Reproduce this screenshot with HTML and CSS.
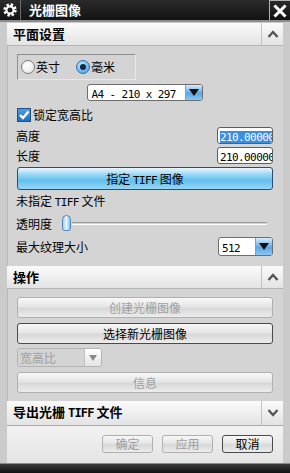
FILE: index.html
```html
<!DOCTYPE html>
<html lang="zh">
<head>
<meta charset="utf-8">
<title>光栅图像</title>
<link rel="stylesheet" href="styles.css">
</head>
<body>
<div class="titlebar">
  <div class="tb-icon">
    <svg width="14" height="14" viewBox="0 0 14 14"><circle cx="7" cy="7" r="5.4" fill="none" stroke="#fff" stroke-width="2.6" stroke-dasharray="2.4 1.84"/><circle cx="7" cy="7" r="3.6" fill="none" stroke="#fff" stroke-width="2.2"/></svg>
  </div>
  <div class="tb-title">光栅图像</div>
  <div class="tb-close">
    <svg width="14" height="14" viewBox="0 0 14 14"><path d="M2.5 2.5 L11.5 11.5 M11.5 2.5 L2.5 11.5" stroke="#fff" stroke-width="3" stroke-linecap="square"/></svg>
  </div>
</div>
<div class="frame">
  <div class="sec-head">
    <span class="sec-title">平面设置</span>
    <div class="toggle"><svg width="12" height="8" viewBox="0 0 12 8"><path d="M1.5 7 L6 2 L10.5 7" fill="none" stroke="#555" stroke-width="2.4"/></svg></div>
  </div>
  <div class="sec-body body1">
    <div class="radio-box">
      <div class="radio"><span class="rdot"></span>英寸</div>
      <div class="radio"><span class="rdot on"></span>毫米</div>
    </div>
    <div class="select sel-a4">
      <div class="sel-text"><span class="lat">A4 - 210 x 297</span></div>
      <div class="sel-arrow"><span class="tri"></span></div>
    </div>
    <div class="check-row">
      <span class="cbox"><svg width="12" height="12" viewBox="0 0 12 12"><path d="M2 6 L5 9 L10.5 2.5" fill="none" stroke="#fff" stroke-width="2.4"/></svg></span>锁定宽高比
    </div>
    <div class="field-row r-h">
      <span>高度</span>
      <div class="field"><span class="lat sel">210.00000</span></div>
    </div>
    <div class="field-row r-l">
      <span>长度</span>
      <div class="field"><span class="lat">210.00000</span></div>
    </div>
    <div class="btn-blue">指定 <span class="lat">TIFF</span> 图像</div>
    <div class="text-row">未指定 <span class="lat">TIFF</span> 文件</div>
    <div class="slider-row">
      <span>透明度</span>
      <div class="slider"><span class="thumb"></span><span class="track"></span></div>
    </div>
    <div class="field-row r-max">
      <span>最大纹理大小</span>
      <div class="select sel-512">
        <div class="sel-text"><span class="lat">512</span></div>
        <div class="sel-arrow"><span class="tri"></span></div>
      </div>
    </div>
  </div>
  <div class="sec-head">
    <span class="sec-title">操作</span>
    <div class="toggle"><svg width="12" height="8" viewBox="0 0 12 8"><path d="M1.5 7 L6 2 L10.5 7" fill="none" stroke="#555" stroke-width="2.4"/></svg></div>
  </div>
  <div class="sec-body body2">
    <div class="btn disabled">创建光栅图像</div>
    <div class="btn">选择新光栅图像</div>
    <div class="select sel-ratio disabled">
      <div class="sel-text">宽高比</div>
      <div class="sel-arrow"><span class="tri"></span></div>
    </div>
    <div class="btn disabled">信息</div>
  </div>
  <div class="sec-head head3">
    <span class="sec-title">导出光栅 <span class="lat-b">TIFF</span> 文件</span>
    <div class="toggle"><svg width="12" height="8" viewBox="0 0 12 8"><path d="M1.5 1 L6 6 L10.5 1" fill="none" stroke="#555" stroke-width="2.4"/></svg></div>
  </div>
  <div class="footer">
    <div class="btn fbtn disabled">确定</div>
    <div class="btn fbtn disabled">应用</div>
    <div class="btn fbtn">取消</div>
  </div>
</div>
<div class="bottombar"></div>
</body>
</html>
```

FILE: styles.css
```css
* { box-sizing: border-box; margin: 0; padding: 0; }
html, body { width: 290px; height: 473px; overflow: hidden; }
body {
  background: #c8c8c8;
  font-family: "Noto Sans CJK SC", "Noto Sans", sans-serif;
  font-size: 12px;
  color: #000;
  display: flex;
  flex-direction: column;
}
.lat { font-family: "DejaVu Sans Mono", monospace; font-size: 11px; letter-spacing: -0.6px; }
.lat-b { font-family: "DejaVu Sans Mono", monospace; font-size: 12px; font-weight: bold; letter-spacing: -0.8px; }

.titlebar {
  height: 22px;
  display: flex;
  background: linear-gradient(#2b2b2b, #121212);
  border-bottom: 2px solid #8c8c8c;
}
.tb-icon {
  width: 21px;
  display: flex;
  align-items: center;
  justify-content: center;
  border-right: 1px solid #6a6a6a;
}
.tb-title {
  flex: 1;
  color: #fff;
  font-weight: bold;
  font-size: 13px;
  line-height: 20px;
  padding-left: 8px;
}
.tb-close {
  width: 21px;
  display: flex;
  align-items: center;
  justify-content: center;
  border-left: 1px solid #b0b0b0;
  border-top: 1px solid #b0b0b0;
}

.frame {
  flex: 1;
  display: flex;
  flex-direction: column;
  padding: 1px 7px 0 7px;
  background: #cbcbcb;
}

.sec-head {
  height: 23px;
  display: flex;
  align-items: stretch;
  background: linear-gradient(#fbfbfb, #e3e3e3);
  border-bottom: 1px solid #b5b5b5;
}
.sec-title {
  flex: 1;
  font-weight: bold;
  font-size: 13px;
  line-height: 22px;
  padding-left: 6px;
}
.toggle {
  width: 22px;
  display: flex;
  align-items: center;
  justify-content: center;
  border-left: 1px solid #c4c4c4;
}
.head3 { height: 25px; border-bottom: 1px solid #a8a8a8; }

.sec-body {
  background: #d4d4d4;
  display: flex;
  flex-direction: column;
  padding: 0 10px 0 9px;
  border-left: 1px solid #b8b8b8;
}
.body1 { height: 220px; padding-top: 8px; }
.body2 { height: 112px; padding-top: 8px; gap: 0; }

.radio-box {
  width: 119px;
  height: 26px;
  border: 1px solid #8e8e8e;
  border-right-color: #e8e8e8;
  border-bottom-color: #e8e8e8;
  display: flex;
  align-items: center;
  padding-left: 3px;
  gap: 16px;
}
.radio { display: flex; align-items: center; gap: 1px; line-height: 16px; }
.rdot {
  width: 14px;
  height: 14px;
  border-radius: 50%;
  border: 1px solid #7a7a7a;
  background: radial-gradient(circle at 40% 35%, #ffffff, #e2e2e2);
  display: inline-block;
  position: relative;
}
.rdot.on {
  border-color: #2a6fb8;
  background: radial-gradient(circle at 40% 35%, #cde9ff, #3d93dc);
}
.rdot.on::after {
  content: "";
  position: absolute;
  left: 3px; top: 3px;
  width: 6px; height: 6px;
  border-radius: 50%;
  background: #0c2a4a;
}

.select {
  display: flex;
  height: 17px;
  border: 1px solid #6e6e6e;
  border-radius: 3px;
  background: #fff;
  overflow: hidden;
}
.sel-text {
  flex: 1;
  padding-left: 4px;
  line-height: 15px;
  white-space: nowrap;
}
.sel-arrow {
  width: 17px;
  background: linear-gradient(#d9eefc, #5aa8e6 55%, #8cc6f0);
  border-left: 1px solid #7aa0c8;
  display: flex;
  align-items: center;
  justify-content: center;
}
.tri {
  width: 0; height: 0;
  border-left: 5px solid transparent;
  border-right: 5px solid transparent;
  border-top: 7px solid #111;
}
.sel-a4 { width: 116px; align-self: center; margin-top: 4px; margin-left: -1px; }

.check-row {
  margin-top: 6px;
  height: 16px;
  display: flex;
  align-items: center;
  gap: 2px;
  line-height: 16px;
}
.cbox {
  width: 14px; height: 14px;
  border: 1px solid #1d4f86;
  background: linear-gradient(#4e9ee0, #1f6fbf);
  display: flex;
  align-items: center;
  justify-content: center;
}

.field-row {
  display: flex;
  justify-content: space-between;
  align-items: center;
  height: 17px;
}
.field-row > span:first-child { margin-left: -1px; }
.r-h { margin-top: 4px; }
.r-l { margin-top: 3px; }
.field {
  width: 56px;
  height: 17px;
  border: 1px solid #5e5e5e;
  border-radius: 3px;
  background: #fff;
  overflow: hidden;
  white-space: nowrap;
  line-height: 15px;
  padding-left: 2px;
}
.field .sel { background: #3b8ee0; color: #fff; }

.btn-blue {
  margin-top: 3px;
  height: 23px;
  border: 1px solid #2f4c6c;
  border-radius: 3px;
  background: linear-gradient(#eaf7ff, #8fd3f6 35%, #62bfee 60%, #9ad6f4);
  text-align: center;
  line-height: 21px;
}
.text-row {
  margin-top: 3px;
  height: 16px;
  line-height: 16px;
  margin-left: -1px;
}
.slider-row {
  margin-top: 4px;
  height: 20px;
  display: flex;
  align-items: center;
}
.slider-row > span { margin-left: -1px; }
.slider {
  flex: 1;
  display: flex;
  align-items: center;
  margin-left: 10px;
  margin-right: 6px;
  height: 20px;
}
.thumb {
  width: 9px;
  height: 16px;
  border: 1px solid #4f86b8;
  border-radius: 5px 5px 3px 3px;
  background: linear-gradient(90deg, #9ccff0, #e8f6ff 50%, #7dbfe8);
  flex: none;
}
.track {
  flex: 1;
  height: 3px;
  border-top: 1px solid #9a9a9a;
  border-bottom: 1px solid #ffffff;
  margin-left: 1px;
}
.r-max { margin-top: 4px; height: 19px; }
.sel-512 { width: 55px; height: 19px; }
.sel-512 .sel-text { line-height: 17px; padding-left: 3px; }

.btn {
  height: 21px;
  border: 1px solid #4a4a4a;
  border-radius: 3px;
  background: linear-gradient(#f8f8f8, #e6e6e6 45%, #d8d8d8 55%, #ececec);
  text-align: center;
  line-height: 19px;
}
.btn.disabled { border-color: #b0b0b0; color: #a0a0a0; }
.body2 .btn + .btn { margin-top: 5px; }
.sel-ratio {
  width: 85px;
  height: 19px;
  margin-top: 4px;
  margin-bottom: 5px;
  border-color: #b4b4b4;
  background: #d4d4d4;
  color: #a0a0a0;
}
.sel-ratio .sel-text { line-height: 17px; padding-left: 2px; }
.sel-ratio .sel-arrow {
  background: linear-gradient(#ffffff, #e4e4e4);
  border-left: 1px solid #c0c0c0;
}
.sel-ratio .tri { border-top-color: #8a8a8a; border-left-width: 4px; border-right-width: 4px; border-top-width: 6px; }

.footer {
  height: 37px;
  display: flex;
  justify-content: flex-end;
  align-items: flex-start;
  padding: 9px 10px 0 0;
  gap: 9px;
  background: linear-gradient(#f2f2f2, #e4e4e4);
}
.fbtn { width: 51px; height: 18px; line-height: 16px; }

.bottombar {
  height: 10px;
  background: linear-gradient(#3a3a3a, #111);
  border-top: 1px solid #8a8a8a;
}
```
